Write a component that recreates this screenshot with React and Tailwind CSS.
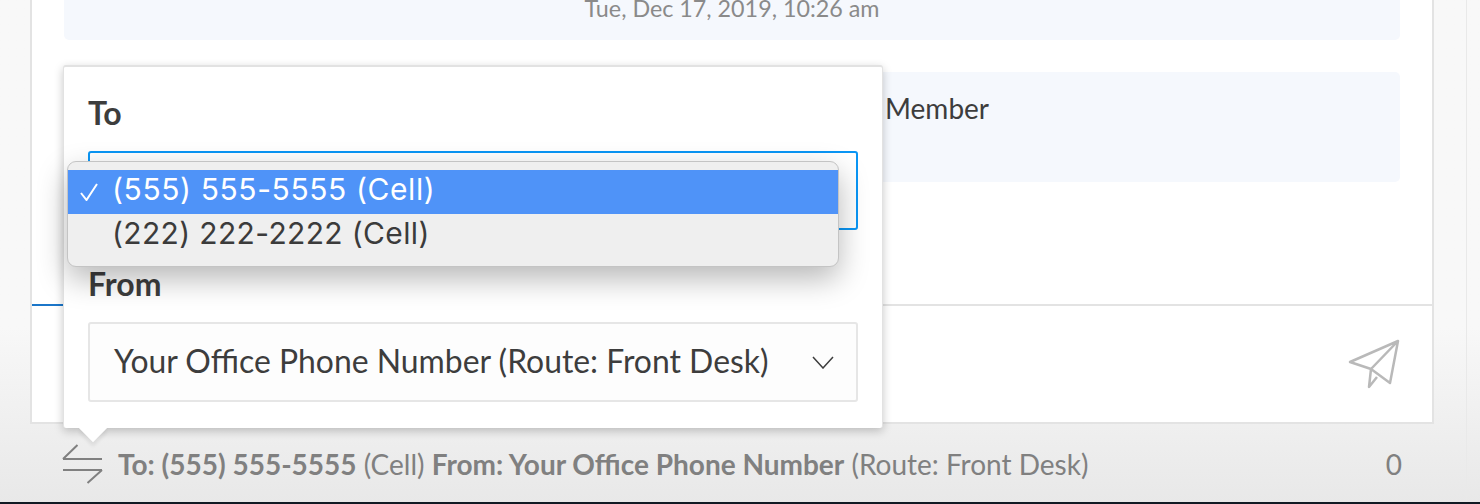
const SwapIcon = () => (
  <svg width="41" height="40" viewBox="0 0 41 40" fill="none" stroke="#808080" strokeWidth="2" className="shrink-0">
    <path d="M1 15H40M1 15L15.5 1M1 26H40M40 26L25.5 39" />
  </svg>
);

const SendIcon = () => (
  <svg width="52" height="50" viewBox="0 0 52 50" fill="none" stroke="#b9b9b9" strokeWidth="2.5" strokeLinejoin="round">
    <path d="M50 2L2 23L23 30L42 44ZM23 30L50 2M23 30L21 48L29 38" />
  </svg>
);

const Chevron = () => (
  <svg width="22" height="13" viewBox="0 0 22 13" fill="none" stroke="#3d3d3d" strokeWidth="1.5">
    <path d="M1 1L11 12L21 1" />
  </svg>
);

const CheckMark = () => (
  <svg width="18" height="18" viewBox="0 0 18 18" fill="none" stroke="#ffffff" strokeWidth="2">
    <path d="M1 10L6.5 17L17 1" />
  </svg>
);

const PhoneMenu = () => (
  <div className="absolute left-[3px] top-[94px] z-10 w-[772px] h-[106px] py-[8px] rounded-[9px] border border-[#c4c4c4] bg-[#efefef] shadow-[0_12px_30px_rgba(0,0,0,0.28)] font-['Inter',sans-serif] text-[30px] leading-[38px]">
    <div className="flex h-[44px] bg-[#4f93f8] text-white tracking-[0.6px]">
      <span className="flex w-[44px] items-center pl-[12px]"><CheckMark /></span>
      <span>(555) 555-5555 (Cell)</span>
    </div>
    <div className="flex h-[44px] text-[#3b3b3b] tracking-[0.35px]">
      <span className="w-[44px]"></span>
      <span>(222) 222-2222 (Cell)</span>
    </div>
  </div>
);

const RoutePopup = () => (
  <div className="absolute left-[63px] top-[65px] z-20 w-[820px] h-[363px] rounded-[3px] border-t-2 border-x border-[#e2e2e2] border-b-0 bg-white px-[24px] pt-[27px] shadow-[0_3px_10px_rgba(0,0,0,0.22)]">
    <div className="text-[32px] leading-[38px] font-bold text-[#3d3d3d]">To</div>
    <div className="mt-[19px] h-[79px] rounded-[3px] border-2 border-[#0a96f5] bg-white"></div>
    <PhoneMenu />
    <div className="mt-[35px] text-[32px] leading-[38px] font-bold text-[#3d3d3d]">From</div>
    <div className="mt-[19px] flex h-[80px] items-center justify-between rounded-[3px] border-2 border-[#e6e6e6] bg-[#fdfdfd] pl-[24px] pr-[22px] text-[31.9px] text-[#3d3d3d]">
      <span>Your Office Phone Number (Route: Front Desk)</span>
      <Chevron />
    </div>
    <div className="absolute left-[19px] bottom-[-10px] h-[20px] w-[20px] rotate-45 bg-white shadow-[3px_3px_4px_rgba(0,0,0,0.08)] -z-10"></div>
  </div>
);

const App = () => {
  return (
    <div className="relative h-[504px] overflow-hidden bg-gradient-to-b from-[#f8f8f8] from-65% to-[#e8e8e8] font-['Lato',sans-serif]">
      <div className="absolute right-[13px] top-0 h-full w-px bg-[#e9e9e9]"></div>

      <div className="ml-[30px] w-[1404px] h-[424px] flex flex-col border-x-2 border-b-2 border-[#e3e3e3] bg-white">
        <div className="h-[304px] px-[32px]">
          <div className="h-[40px] rounded-b-[5px] bg-[#f5f8fd] text-center text-[23.3px] leading-[16px] text-[#8a8a8a]">
            Tue, Dec 17, 2019, 10:26 am
          </div>
          <div className="mt-[32px] h-[110px] rounded-[5px] bg-[#f5f8fd] pl-[821px] pt-[18px] text-[28px] leading-[36px] text-[#3d3d3d]">
            Member
          </div>
        </div>
        <div className="relative flex-1 border-t-2 border-[#e3e3e3] flex items-start justify-end pr-[32px] pt-[33px]">
          <div className="absolute left-0 top-[-2px] h-[2px] w-[60px] bg-[#1b76c9]"></div>
          <SendIcon />
        </div>
      </div>

      <RoutePopup />

      <div className="flex h-[78px] items-center pl-[62px] pr-[78px] pt-[1px] text-[28px] text-[#808080]">
        <SwapIcon />
        <div className="ml-[15px] flex-1 whitespace-pre">
          <span className="font-bold">To: (555) 555-5555</span> (Cell) <span className="font-bold">From: Your Office Phone Number</span> (Route: Front Desk)
        </div>
        <span>0</span>
      </div>
      <div className="absolute bottom-0 left-0 h-[2px] w-full bg-[#111a24]"></div>
    </div>
  );
};

export default App;
